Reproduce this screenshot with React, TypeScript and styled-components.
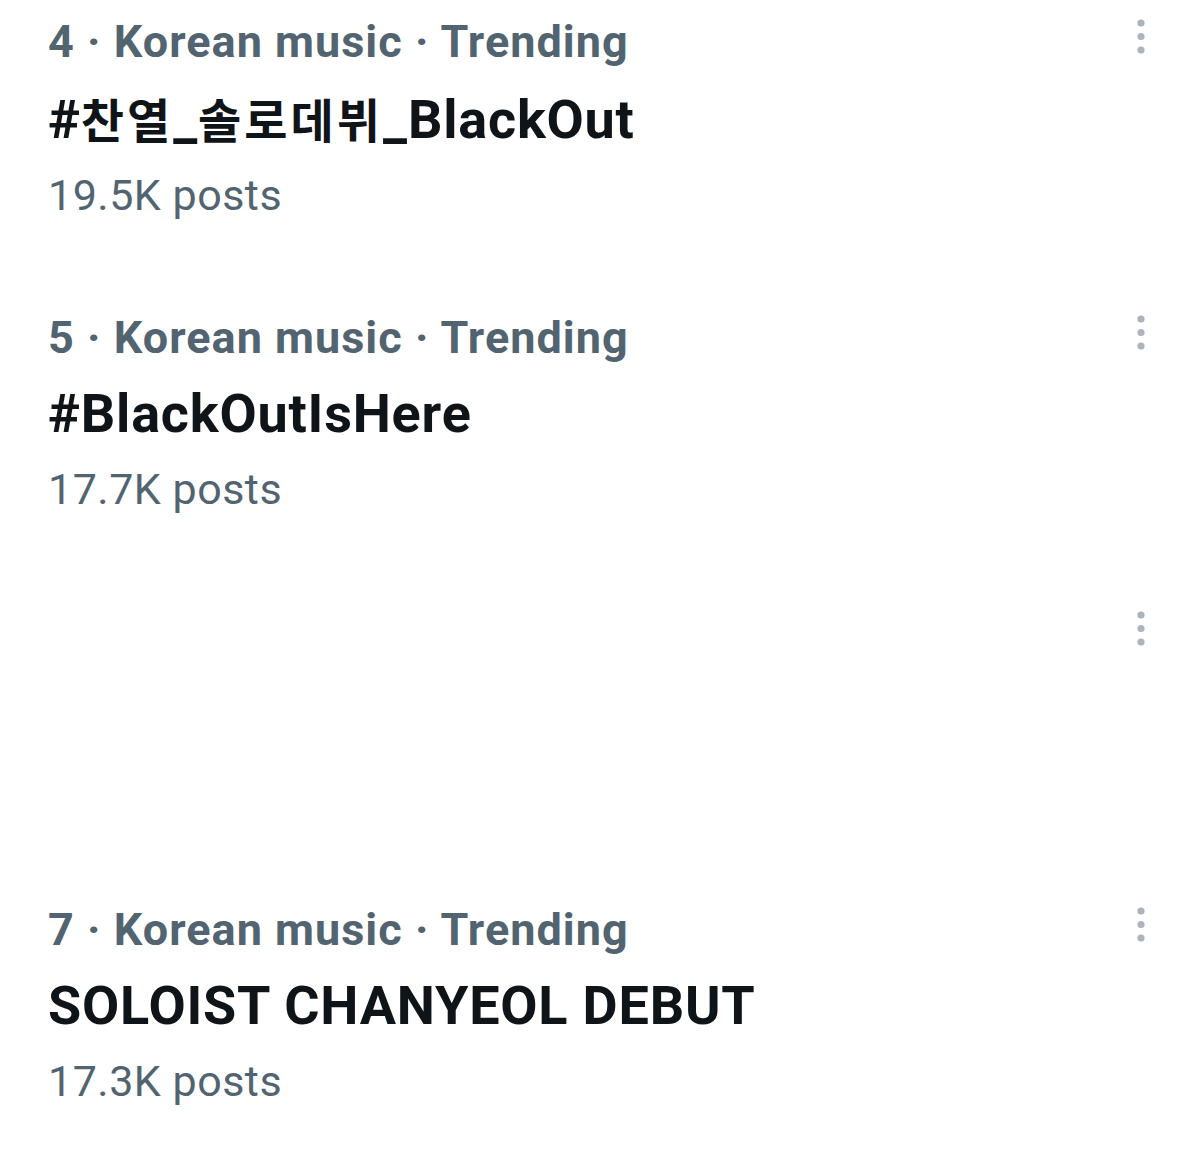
import styled, { createGlobalStyle } from "styled-components";

const GlobalStyle = createGlobalStyle`
  html, body {
    margin: 0;
    padding: 0;
    background: #ffffff;
  }
  body {
    font-family: Roboto, "Noto Sans CJK KR", "Liberation Sans", sans-serif;
    -webkit-font-smoothing: antialiased;
  }
`;

const List = styled.div`
  width: 1200px;
  height: 1157px;
  display: flex;
  flex-direction: column;
  padding-top: 12px;
  box-sizing: border-box;
  overflow: hidden;
`;

const Row = styled.div`
  height: 296px;
  flex-shrink: 0;
  display: grid;
  grid-template-columns: 1fr 60px;
  padding: 0 48px 0 48px;
  box-sizing: border-box;
`;

const Texts = styled.div`
  display: flex;
  flex-direction: column;
`;

const Category = styled.div`
  font-size: 45px;
  line-height: 60px;
  font-weight: 700;
  color: #536471;
  letter-spacing: 1px;
  white-space: nowrap;
`;

const Title = styled.div`
  margin-top: 11px;
  font-size: 54px;
  line-height: 70px;
  font-weight: 700;
  color: #0f1419;
  letter-spacing: 0.8px;
  white-space: nowrap;
`;

const Hangul = styled.span`
  font-family: "Noto Sans CJK KR", sans-serif;
  font-size: 47px;
  letter-spacing: 3px;
`;

const Posts = styled.div`
  margin-top: 10px;
  font-size: 43px;
  line-height: 60px;
  font-weight: 400;
  color: #536471;
  letter-spacing: 0.5px;
  white-space: nowrap;
`;

const MoreButton = styled.div`
  display: flex;
  justify-content: flex-end;
  align-items: flex-start;
  padding-top: 5px;
  padding-right: 4px;
`;

const MoreIcon = () => (
  <svg width="14" height="40" viewBox="0 0 14 40">
    <circle cx="7" cy="6" r="3.6" fill="#a9b4bf" />
    <circle cx="7" cy="19.5" r="3.6" fill="#a9b4bf" />
    <circle cx="7" cy="33" r="3.6" fill="#a9b4bf" />
  </svg>
);

type Trend = { rank?: number; name?: React.ReactNode; posts?: string };

const trends: Trend[] = [
  {
    rank: 4,
    name: (
      <>
        #<Hangul>찬열</Hangul>_<Hangul>솔로데뷔</Hangul>_BlackOut
      </>
    ),
    posts: "19.5K posts",
  },
  { rank: 5, name: "#BlackOutIsHere", posts: "17.7K posts" },
  {},
  { rank: 7, name: "SOLOIST CHANYEOL DEBUT", posts: "17.3K posts" },
];

export default function App() {
  return (
    <>
      <GlobalStyle />
      <List>
        {trends.map((t, i) => (
          <Row key={i}>
            <Texts>
              {t.rank && (
                <>
                  <Category>{t.rank} · Korean music · Trending</Category>
                  <Title>{t.name}</Title>
                  <Posts>{t.posts}</Posts>
                </>
              )}
            </Texts>
            <MoreButton>
              <MoreIcon />
            </MoreButton>
          </Row>
        ))}
      </List>
    </>
  );
}
